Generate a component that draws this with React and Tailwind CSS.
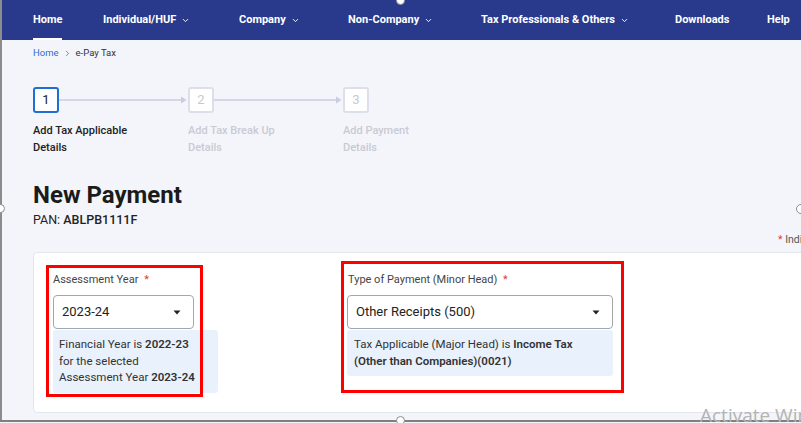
import React from "react";
import { ChevronDown, ChevronRight } from "lucide-react";

const navItems = [
  { label: "Home", w: "w-[70px]", active: true },
  { label: "Individual/HUF", w: "w-[136px]", drop: true },
  { label: "Company", w: "w-[109px]", drop: true },
  { label: "Non-Company", w: "w-[133px]", drop: true },
  { label: "Tax Professionals & Others", w: "w-[194px]", drop: true },
  { label: "Downloads", w: "w-[92px]" },
  { label: "Help", w: "w-[40px]" },
];

function Connector() {
  return (
    <svg width="129" height="26" viewBox="0 0 129 26" className="shrink-0">
      <line x1="0" y1="13" x2="124" y2="13" stroke="#c9cce2" strokeWidth="1.5" />
      <path d="M122 9.5 L127.5 13 L122 16.5 Z" fill="#c9cce2" />
    </svg>
  );
}

function Caret() {
  return (
    <svg width="8" height="5" viewBox="0 0 8 5">
      <path d="M0.5 0.5 L7.5 0.5 L4 4.5 Z" fill="#222" />
    </svg>
  );
}

export default function App() {
  return (
    <div
      className="relative w-[801px] h-[423px] overflow-hidden bg-[#f4f5fa] text-[#222]"
      style={{ fontFamily: "Roboto, 'Liberation Sans', sans-serif" }}
    >
      {/* top nav */}
      <div className="h-[40px] bg-[#293a8d] flex pl-[33px] text-white text-[11px] font-bold">
        {navItems.map((n) => (
          <div key={n.label} className={`${n.w} shrink-0 h-full flex items-center`}>
            {n.active ? (
              <span className="h-full inline-flex items-center border-b-2 border-white pt-[2px]">
                {n.label}
              </span>
            ) : (
              <span className="inline-flex items-center gap-[5px] whitespace-nowrap">
                {n.label}
                {n.drop && <ChevronDown size={9} strokeWidth={2.5} />}
              </span>
            )}
          </div>
        ))}
      </div>

      <div className="pl-[33px]">
        {/* breadcrumb */}
        <div className="pt-[6px] flex items-center text-[9.5px] leading-[14px]">
          <span className="text-[#2a6fd3]">Home</span>
          <ChevronRight size={9} strokeWidth={2} className="mx-[4px] text-[#666]" />
          <span className="text-[#333]">e-Pay Tax</span>
        </div>

        {/* stepper */}
        <div className="mt-[27px] flex items-center">
          <div className="w-[26px] h-[26px] shrink-0 rounded-[3px] border-2 border-[#1f6fd2] bg-white flex items-center justify-center text-[13px] text-[#222]">
            1
          </div>
          <Connector />
          <div className="w-[26px] h-[26px] shrink-0 rounded-[3px] border-2 border-[#dcdeeb] bg-white flex items-center justify-center text-[13px] text-[#c6c8d6]">
            2
          </div>
          <Connector />
          <div className="w-[26px] h-[26px] shrink-0 rounded-[3px] border-2 border-[#dcdeeb] bg-white flex items-center justify-center text-[13px] text-[#c6c8d6]">
            3
          </div>
        </div>
        <div className="mt-[9px] flex text-[11px] leading-[17px] font-medium">
          <div className="w-[155px] shrink-0">
            <div className="w-[100px] text-[#222]">Add Tax Applicable Details</div>
          </div>
          <div className="w-[155px] shrink-0">
            <div className="w-[100px] text-[#c9cad3]">Add Tax Break Up Details</div>
          </div>
          <div className="w-[155px] shrink-0">
            <div className="w-[90px] text-[#c9cad3]">Add Payment Details</div>
          </div>
        </div>

        {/* title */}
        <h1 className="mt-[25px] text-[24px] leading-[28px] font-bold text-[#1b1b1b]">New Payment</h1>
        <div className="mt-[3px] text-[12.5px] leading-[16px]">
          PAN: <span className="font-medium">ABLPB1111F</span>
        </div>
        <div className="mt-[5px] flex justify-end text-[10.5px] leading-[14px] text-[#555]">
          <div className="w-[23px] whitespace-nowrap">
            <span className="text-[#e03a3a]">*</span> Indicates mandatory fields
          </div>
        </div>

        {/* card */}
        <div className="relative mt-[5px] w-[790px] bg-white border border-[#e4e6ee] rounded-[4px] pt-[20px] pb-[19px] pl-[19px] flex">
          <div className="w-[294px] shrink-0">
            <div className="text-[11px] leading-[14px] text-[#444]">
              Assessment Year <span className="text-[#e03a3a] ml-[3px]">*</span>
            </div>
            <div className="mt-[8px] w-[141px] h-[34px] border border-[#a3a6ad] rounded-[4px] bg-white flex items-center justify-between pl-[8px] pr-[12px] text-[13px] text-[#222]">
              <span>2023-24</span>
              <Caret />
            </div>
            <div className="mt-[1px] w-[165px] bg-[#e8f1fc] rounded-[3px] pl-[6px] pt-[6px] pb-[7px] text-[11.5px] leading-[16.5px] text-[#333]">
              Financial Year is <b className="font-semibold">2022-23</b>
              <br />
              for the selected
              <br />
              Assessment Year <b className="font-semibold">2023-24</b>
            </div>
          </div>
          <div className="w-[266px] shrink-0">
            <div className="pl-[1px] text-[11px] leading-[14px] text-[#444]">
              Type of Payment (Minor Head) <span className="text-[#e03a3a] ml-[3px]">*</span>
            </div>
            <div className="mt-[8px] h-[34px] border border-[#a3a6ad] rounded-[4px] bg-white flex items-center justify-between pl-[8px] pr-[12px] text-[13px] text-[#222]">
              <span>Other Receipts (500)</span>
              <Caret />
            </div>
            <div className="mt-[1px] bg-[#e8f1fc] rounded-[3px] pl-[7px] pt-[6px] pb-[7px] text-[11.5px] leading-[16.5px] text-[#333]">
              Tax Applicable (Major Head) is <b className="font-semibold">Income Tax</b>
              <br />
              <b className="font-semibold">(Other than Companies)(0021)</b>
            </div>
          </div>

          {/* red annotation boxes */}
          <div className="absolute left-[12px] top-[12px] w-[157px] h-[132px] border-[3px] border-[#ff0000] pointer-events-none" />
          <div className="absolute left-[307px] top-[8px] w-[283px] h-[132px] border-[3px] border-[#ff0000] pointer-events-none" />
        </div>
      </div>

      {/* screenshot frame + watermark */}
      <div className="absolute left-0 top-0 bottom-[2px] w-[2px] bg-[#8c8c8c]" />
      <div className="absolute left-0 right-0 top-[420px] h-[1.5px] bg-[#7f7f7f]" />
      <div className="absolute left-[396px] top-[-4px] w-[9px] h-[9px] rounded-full bg-white border border-[#8c8c8c]" />
      <div className="absolute left-[-4px] top-[204px] w-[9px] h-[9px] rounded-full bg-white border border-[#8c8c8c]" />
      <div className="absolute left-[796px] top-[204px] w-[10px] h-[10px] rounded-full bg-white border-[1.5px] border-[#8c8c8c]" />
      <div className="absolute left-[396px] top-[416px] w-[9px] h-[9px] rounded-full bg-white border border-[#8c8c8c]" />
      <div
        className="absolute left-[700px] top-[401px] whitespace-nowrap text-[19px] text-[#b3b3b3]"
        style={{ fontFamily: "'Open Sans', 'Liberation Sans', sans-serif" }}
      >
        Activate Windows
      </div>
    </div>
  );
}
